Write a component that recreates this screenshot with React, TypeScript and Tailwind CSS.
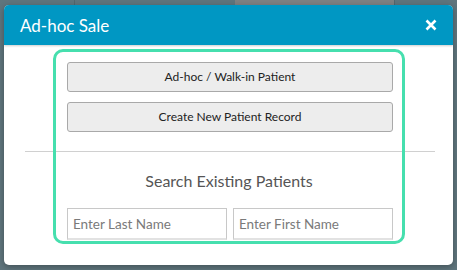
import React from "react";

export default function App() {
  return (
    <div
      className="relative w-[457px] h-[270px] overflow-hidden bg-[#5f757d]"
      style={{ fontFamily: "Lato, 'Open Sans', sans-serif" }}
    >
      {/* background page hints */}
      <div className="absolute left-[235px] top-0 w-[159px] h-[5px] bg-[#7e8182]" />
      <div className="absolute left-[74px] top-0 w-px h-[5px] bg-[#52676e]" />
      <div className="absolute left-[394px] top-0 w-px h-[5px] bg-[#52676e]" />

      <div className="absolute left-[4px] top-[5px] w-[449px] h-[260px] rounded-[5px] bg-white overflow-hidden shadow-[0_2px_6px_rgba(0,0,0,0.3)] flex flex-col">
        <div className="h-[40px] shrink-0 bg-[#0097c3] flex items-center justify-between pl-[16px] pr-[16px] shadow-[0_1px_2px_rgba(0,0,0,0.2)]">
          <span className="text-white text-[17px] leading-none">Ad-hoc Sale</span>
          <svg width="12" height="12" viewBox="0 0 12 12">
            <path d="M1.5 1.5 L10.5 10.5 M10.5 1.5 L1.5 10.5" stroke="white" strokeWidth="2.6" strokeLinecap="butt" />
          </svg>
        </div>

        <div className="relative flex-1 flex flex-col px-[21px] pt-[17px]">
          <div className="flex flex-col gap-[10px] w-[326px] ml-[42px]">
            <button className="h-[30px] rounded-[3px] border border-[#a9a9a9] bg-[#ededed] text-[12px] text-[#222]">
              Ad-hoc / Walk-in Patient
            </button>
            <button className="h-[30px] rounded-[3px] border border-[#a9a9a9] bg-[#ededed] text-[12px] text-[#222]">
              Create New Patient Record
            </button>
          </div>

          <div className="mt-[19px] h-px bg-[#d0d0d0] mr-[-3px]" />

          <div className="mt-[19px] text-center text-[16px] text-[#555] leading-[20px] ml-[1px]">
            Search Existing Patients
          </div>

          <div className="mt-[17px] flex gap-[6px] w-[326px] ml-[42px]">
            <input
              placeholder="Enter Last Name"
              className="w-[160px] h-[32px] border border-[#c8c8c8] border-b-2 border-b-[#e2e2e2] px-[5px] text-[13.5px] placeholder:text-[#7a7a7a] outline-none"
            />
            <input
              placeholder="Enter First Name"
              className="w-[160px] h-[32px] border border-[#c8c8c8] border-b-2 border-b-[#e2e2e2] px-[5px] text-[13.5px] placeholder:text-[#7a7a7a] outline-none"
            />
          </div>

          <div className="absolute left-[49px] top-[4px] w-[352px] h-[195px] rounded-[10px] border-[3px] border-[#46dfae] pointer-events-none" />
        </div>
      </div>
    </div>
  );
}
